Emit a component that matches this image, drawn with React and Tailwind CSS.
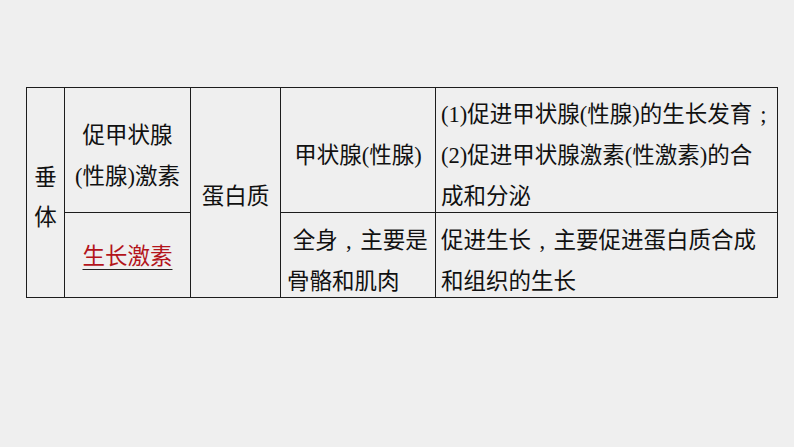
const font = { fontFamily: '"Liberation Serif", "Noto Sans CJK SC", sans-serif' };

function Cell({ className = "", children }) {
    return <div className={`bg-[#efefef] flex ${className}`}>{children}</div>;
}

// full-width punctuation: a narrow mark centred in a one-em box
function P({ children }) {
    return <span className="inline-block w-[1em] text-center">{children}</span>;
}

export default function App() {
    return (
        <div className="w-[794px] h-[447px] bg-[#efefef] pl-[26px] pt-[87px] text-[#111] text-[22.5px] leading-[41px]" style={font}>
            <div className="grid w-fit grid-cols-[37px_125px_89px_154px_341px] grid-rows-[124px_84px] gap-px bg-[#1c1c1c] p-px">
                <Cell className="row-span-2 flex-col items-center justify-center pt-[10px] leading-[40px]">
                    <span>垂</span>
                    <span>体</span>
                </Cell>
                <Cell className="flex-col items-center justify-center pt-[11px]">
                    <span>促甲状腺</span>
                    <span>(性腺)激素</span>
                </Cell>
                <Cell className="row-span-2 items-center justify-center pt-[8px]">
                    <span>蛋白质</span>
                </Cell>
                <Cell className="items-center justify-center pt-[10px]">
                    <span>甲状腺(性腺)</span>
                </Cell>
                <Cell className="flex-col justify-center pl-[5px] pt-[11px] whitespace-nowrap">
                    <span>(1)促进甲状腺(性腺)的生长发育<P>;</P></span>
                    <span>(2)促进甲状腺激素(性激素)的合</span>
                    <span>成和分泌</span>
                </Cell>
                <Cell className="items-center justify-center pt-[2px]">
                    <span className="text-[#b3141b] underline decoration-[#222] decoration-1 underline-offset-[5px]">生长激素</span>
                </Cell>
                <Cell className="flex-col justify-center pl-[6px] pt-[11px] whitespace-nowrap">
                    <span>{"\u00a0"}全身<P>,</P>主要是</span>
                    <span>骨骼和肌肉</span>
                </Cell>
                <Cell className="flex-col justify-center pl-[5px] pt-[11px] whitespace-nowrap">
                    <span>促进生长<P>,</P>主要促进蛋白质合成</span>
                    <span>和组织的生长</span>
                </Cell>
            </div>
        </div>
    );
}
